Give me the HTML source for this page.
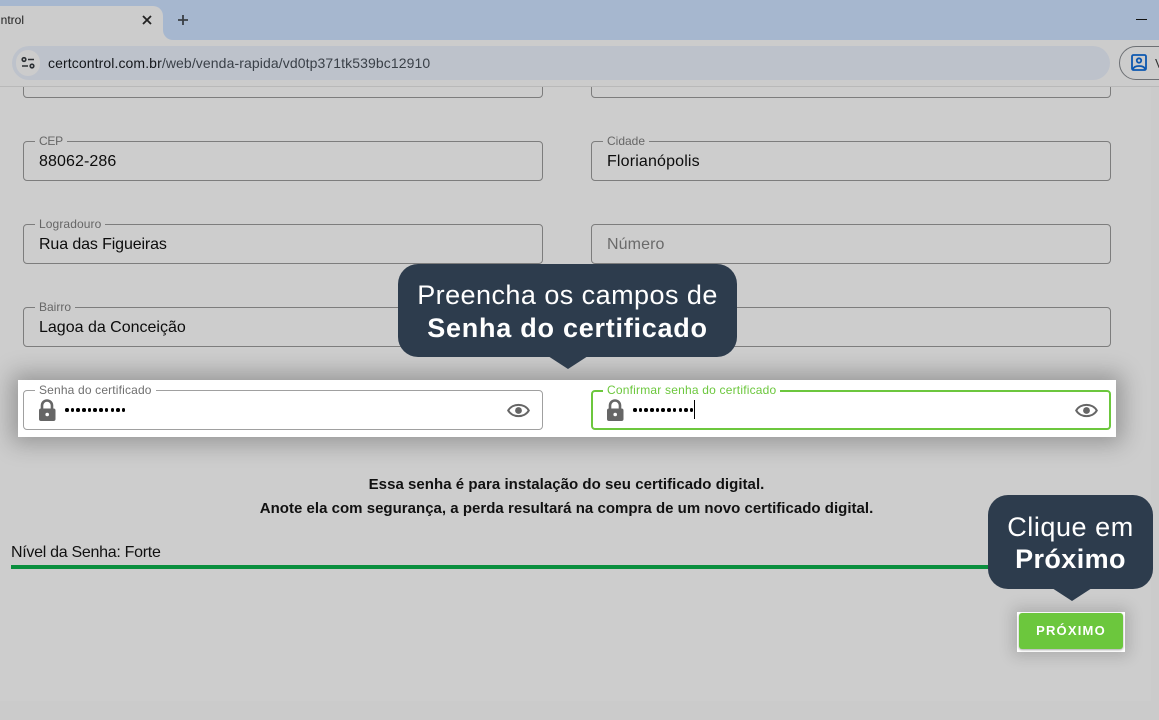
<!DOCTYPE html>
<html lang="pt-BR"><head><meta charset="utf-8"><title>Senha do certificado</title>
<style>
html,body{margin:0;padding:0;width:1159px;height:720px;overflow:hidden;background:#cdcdcd;font-family:"Liberation Sans",Arial,sans-serif}
*{box-sizing:border-box}
.a{position:absolute;white-space:nowrap}
.f{position:absolute;width:520px;height:40px;border:1px solid #7d7d7d;border-radius:4px}
.l{position:absolute;left:11px;top:-7px;padding:0 4px;background:#cdcdcd;font-size:12px;line-height:13px;color:#666;white-space:nowrap}
.v{position:absolute;left:15px;top:11px;font-size:16px;line-height:18px;color:#0c0c0c;white-space:nowrap}
.tip{position:absolute;background:#2d3c4d;border-radius:20px;color:#fff;text-align:center}
.tip:after{content:"";position:absolute;left:50%;bottom:-12px;margin-left:-20px;border-left:20px solid transparent;border-right:20px solid transparent;border-top:13px solid #2d3c4d}
.tip.t2:after{margin-left:-19px}
.dots{position:absolute;left:41px;top:17px;display:flex;gap:2.2px}
.dots i{display:block;width:3.5px;height:3.5px;border-radius:50%;background:#000}
</style></head><body>

<!-- bottom strip and scrollbar tone -->
<div class="a" style="left:0;top:701px;width:1159px;height:19px;background:#cbcbcb"></div>
<div class="a" style="left:1151px;top:87px;width:8px;height:633px;background:#cbcbcb"></div>

<!-- browser chrome -->
<div class="a" style="left:0;top:0;width:1159px;height:40px;background:#a6b7cf"></div>
<div class="a" style="left:0;top:40px;width:1159px;height:46px;background:#cccccc"></div>
<div class="a" style="left:0;top:86px;width:1159px;height:1px;background:#b9b9b9"></div>
<div class="a" style="left:0;top:6px;width:163px;height:34px;background:#cccccc;border-top-right-radius:10px"></div>
<svg class="a" style="left:163px;top:30px" width="10" height="10"><path d="M0 0A10 10 0 0 0 10 10H0Z" fill="#cccccc"/></svg>
<div class="a" style="left:-1px;top:13px;font-size:12px;line-height:15px;color:#222;width:25px;overflow:hidden;direction:rtl">ntrol</div>
<svg class="a" style="left:141px;top:14px" width="12" height="12"><path d="M2 2L10 10M10 2L2 10" stroke="#222" stroke-width="1.8"/></svg>
<svg class="a" style="left:176px;top:13px" width="14" height="14"><path d="M7 2V12M2 7H12" stroke="#3a3f45" stroke-width="1.8"/></svg>
<div class="a" style="left:1136px;top:19px;width:11px;height:1px;background:#111"></div>

<div class="a" style="left:12px;top:46px;width:1098px;height:34px;border-radius:17px;background:#bdc2cb"></div>
<div class="a" style="left:16px;top:50px;width:24px;height:26px;border-radius:13px;background:#cccccc"></div>
<svg class="a" style="left:20px;top:56px" width="16" height="14" fill="none" stroke="#2b2f33" stroke-width="1.6"><circle cx="4" cy="3.5" r="1.8"/><path d="M8 3.5H14M2 10H8"/><circle cx="12" cy="10" r="1.8"/></svg>
<div class="a" style="left:48px;top:55px;font-size:14px;line-height:16px;color:#3a4048;letter-spacing:.1px"><span style="color:#14171b">certcontrol.com.br</span>/web/venda-rapida/vd0tp371tk539bc12910</div>

<div class="a" style="left:1119px;top:46px;width:60px;height:34px;border:1px solid #6d7074;border-radius:17px"></div>
<svg class="a" style="left:1131px;top:54px" width="16" height="17" fill="none" stroke="#0b57b0" stroke-width="1.8"><rect x="1" y="1" width="14" height="15" rx="1.5"/><circle cx="8" cy="6.5" r="2.2"/><path d="M2 15C3.5 11 12.5 11 14 15"/></svg>
<div class="a" style="left:1155px;top:56px;font-size:13px;line-height:15px;color:#333">V</div>

<!-- top partial fields -->
<div class="f" style="left:23px;top:58px;clip-path:inset(29px -2px -2px -2px)"></div>
<div class="f" style="left:591px;top:58px;clip-path:inset(29px -2px -2px -2px)"></div>

<!-- form rows -->
<div class="f" style="left:23px;top:141px"><span class="l" style="letter-spacing:-.3px">CEP</span><span class="v" style="letter-spacing:.1px">88062-286</span></div>
<div class="f" style="left:591px;top:141px"><span class="l">Cidade</span><span class="v" style="letter-spacing:.16px">Florianópolis</span></div>
<div class="f" style="left:23px;top:224px"><span class="l" style="letter-spacing:.1px">Logradouro</span><span class="v" style="letter-spacing:-.12px">Rua das Figueiras</span></div>
<div class="f" style="left:591px;top:224px"><span class="v" style="color:#6a6a6a;letter-spacing:.1px">Número</span></div>
<div class="f" style="left:23px;top:307px"><span class="l">Bairro</span><span class="v">Lagoa da Conceição</span></div>
<div class="f" style="left:591px;top:307px"></div>

<!-- highlighted password row -->
<div class="a" style="left:18px;top:380px;width:1098px;height:57px;background:#fff;box-shadow:0 0 22px 6px rgba(0,0,0,.28)"></div>

<div class="f" style="left:23px;top:390px;border-color:#a0a0a0">
 <span class="l" style="background:#fff;color:#6f6f6f;letter-spacing:.16px">Senha do certificado</span>
 <svg class="a" style="left:14px;top:8px" width="18" height="23" fill="#666"><path d="M4 10V6.5a5 5 0 0 1 10 0V10" fill="none" stroke="#666" stroke-width="2.6"/><rect x="1" y="9.5" width="16.5" height="12.5" rx="2"/><circle cx="9.2" cy="15.5" r="1.8" fill="#fff"/></svg>
 <div class="dots"><i></i><i></i><i></i><i></i><i></i><i></i><i></i><i></i><i></i><i></i><i></i></div>
 <svg class="a" style="left:483px;top:11px" width="23" height="17" fill="none"><path d="M1.2 8.5C5.5 1 17.5 1 21.8 8.5C17.5 16 5.5 16 1.2 8.5Z" stroke="#666" stroke-width="2"/><circle cx="11.5" cy="8.5" r="3.4" fill="#666"/></svg>
</div>

<div class="f" style="left:591px;top:390px;border:2px solid #6cc73d">
 <span class="l" style="background:#fff;color:#6cc73d;left:10px;top:-8px;letter-spacing:.2px">Confirmar senha do certificado</span>
 <svg class="a" style="left:13px;top:7px" width="18" height="23" fill="#666"><path d="M4 10V6.5a5 5 0 0 1 10 0V10" fill="none" stroke="#666" stroke-width="2.6"/><rect x="1" y="9.5" width="16.5" height="12.5" rx="2"/><circle cx="9.2" cy="15.5" r="1.8" fill="#fff"/></svg>
 <div class="dots" style="left:40px;top:16px"><i></i><i></i><i></i><i></i><i></i><i></i><i></i><i></i><i></i><i></i><i></i></div>
 <div class="a" style="left:101px;top:8px;width:1px;height:19px;background:#000"></div>
 <svg class="a" style="left:482px;top:10px" width="23" height="17" fill="none"><path d="M1.2 8.5C5.5 1 17.5 1 21.8 8.5C17.5 16 5.5 16 1.2 8.5Z" stroke="#666" stroke-width="2"/><circle cx="11.5" cy="8.5" r="3.4" fill="#666"/></svg>
</div>

<!-- tip 1 -->
<div class="tip" style="left:398px;top:264px;width:339px;height:93px">
 <div class="a" style="left:0;width:339px;top:15px;font-size:27px;line-height:32px;font-weight:400;letter-spacing:.45px">Preencha os campos de</div>
 <div class="a" style="left:0;width:339px;top:48px;font-size:27px;line-height:32px;font-weight:700;letter-spacing:.75px">Senha do certificado</div>
</div>

<!-- info text -->
<div class="a" style="left:0;width:1133px;top:476px;text-align:center;font-size:15px;line-height:17px;font-weight:700;color:#111;letter-spacing:.04px">Essa senha é para instalação do seu certificado digital.</div>
<div class="a" style="left:0;width:1133px;top:500px;text-align:center;font-size:15px;line-height:17px;font-weight:700;color:#111;letter-spacing:.02px">Anote ela com segurança, a perda resultará na compra de um novo certificado digital.</div>

<!-- strength -->
<div class="a" style="left:11px;top:544px;font-size:16px;line-height:18px;color:#111;letter-spacing:-.29px">Nível da Senha: Forte</div>
<div class="a" style="left:11px;top:565px;width:1000px;height:4px;background:#0a8f3e"></div>

<!-- tip 2 -->
<div class="tip t2" style="left:988px;top:495px;width:165px;height:94px">
 <div class="a" style="left:0;width:165px;top:16px;font-size:27px;line-height:32px;font-weight:400;letter-spacing:.55px">Clique em</div>
 <div class="a" style="left:0;width:165px;top:48px;font-size:27px;line-height:32px;font-weight:700;letter-spacing:.4px">Próximo</div>
</div>

<!-- button -->
<div class="a" style="left:1017px;top:612px;width:108px;height:40px;background:#fff;box-shadow:0 0 14px 4px rgba(0,0,0,.16)"></div>
<div class="a" style="left:1019px;top:613px;width:104px;height:36px;background:#6cc73d;border-radius:3px;box-shadow:0 1px 2px rgba(0,0,0,.35);color:#fff;font-size:13px;font-weight:700;letter-spacing:1.2px;line-height:36px;text-align:center">PRÓXIMO</div>

</body></html>
